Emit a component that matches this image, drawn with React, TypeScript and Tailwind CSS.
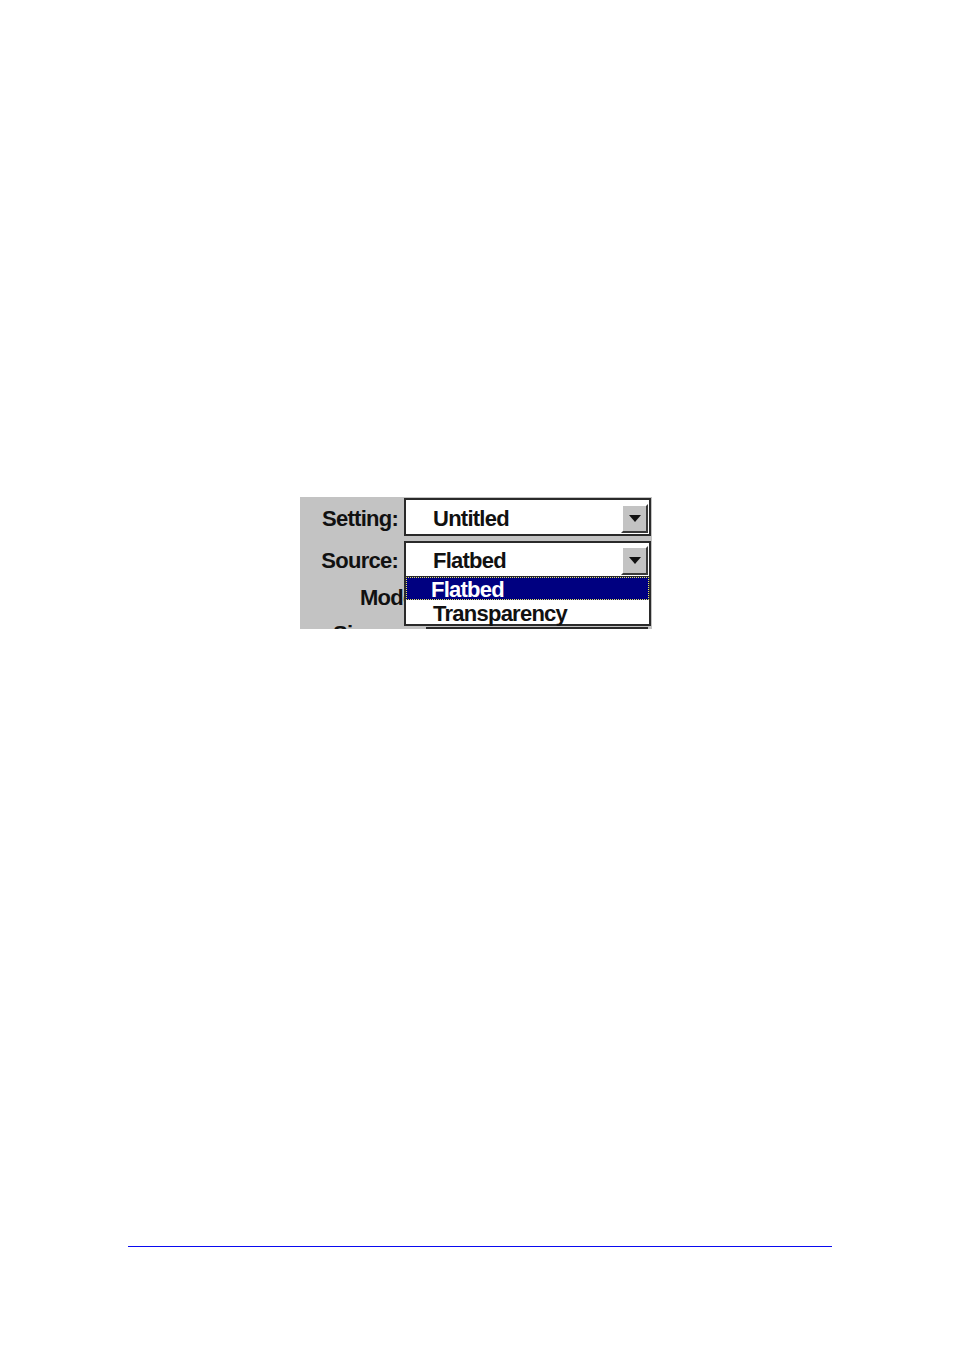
import React from "react"

function DropButton() {
  return (
    <div className="self-end mb-px mr-[1px] w-[27px] h-[29px] bg-[#c3c3c3] border-2 border-t-white border-l-white border-r-[#3a3a3a] border-b-[#3a3a3a] flex items-center justify-center">
      <svg width="12" height="7" viewBox="0 0 12 7">
        <path d="M0 0 H12 L6 7 Z" fill="#111" />
      </svg>
    </div>
  )
}

function ComboRow({ label, value, height, top }: { label: string; value: string; height: string; top: string }) {
  return (
    <div className={`flex ${height} ${top}`}>
      <div className="w-[104px] shrink-0 pr-[6px] pt-[3px] text-right flex items-center justify-end">{label}</div>
      <div className="w-[247px] shrink-0 bg-white border-2 border-[#2a2a2a] flex">
        <div className="flex-1 pl-[27px] pt-[3px] flex items-center">{value}</div>
        <DropButton />
      </div>
    </div>
  )
}

export default function App() {
  return (
    <div className="w-full h-[1352px] bg-white pt-[497px]">
      {/* scanner dialog screenshot */}
      <div
        className="relative ml-[300px] w-[352px] h-[132px] overflow-hidden bg-[#c3c3c3] text-[22px] leading-[24px] font-bold tracking-[-0.75px] text-[#111]"
        style={{ fontFamily: '"Liberation Sans", Arial, sans-serif' }}
      >
        <ComboRow label="Setting:" value="Untitled" height="h-[38px]" top="mt-px" />
        <ComboRow label="Source:" value="Flatbed" height="h-[37px]" top="mt-[5px]" />

        {/* Mode row, mostly hidden behind the open list */}
        <div className="flex h-[49px]">
          <div className="w-[126px] shrink-0 pr-[5px] pt-[8px] text-right">Mode:</div>
          <div className="w-[222px] h-[34px] mt-[6px] bg-white border border-[#2a2a2a]" />
        </div>

        {/* Size row, cut off at the bottom */}
        <div className="flex">
          <div className="w-[126px] shrink-0 pl-[33px] -mt-[5px]">Size:</div>
          <div className="w-[222px] h-[34px] bg-white border-2 border-[#2a2a2a]" />
        </div>

        {/* open dropdown list */}
        <div className="absolute left-[104px] top-[80px] w-[247px] h-[49px] bg-white border-2 border-t-0 border-[#2a2a2a]">
          <div className="h-[23px] bg-[#000080] text-white border border-dotted border-[#e8e860] pl-[24px] pt-[2px] flex items-center">
            Flatbed
          </div>
          <div className="h-[24px] pl-[27px] pt-[3px] flex items-center">Transparency</div>
        </div>
      </div>

      {/* footer rule */}
      <div className="ml-[128px] mt-[617px] w-[704px] h-px bg-[#0a0af0]" />
    </div>
  )
}
